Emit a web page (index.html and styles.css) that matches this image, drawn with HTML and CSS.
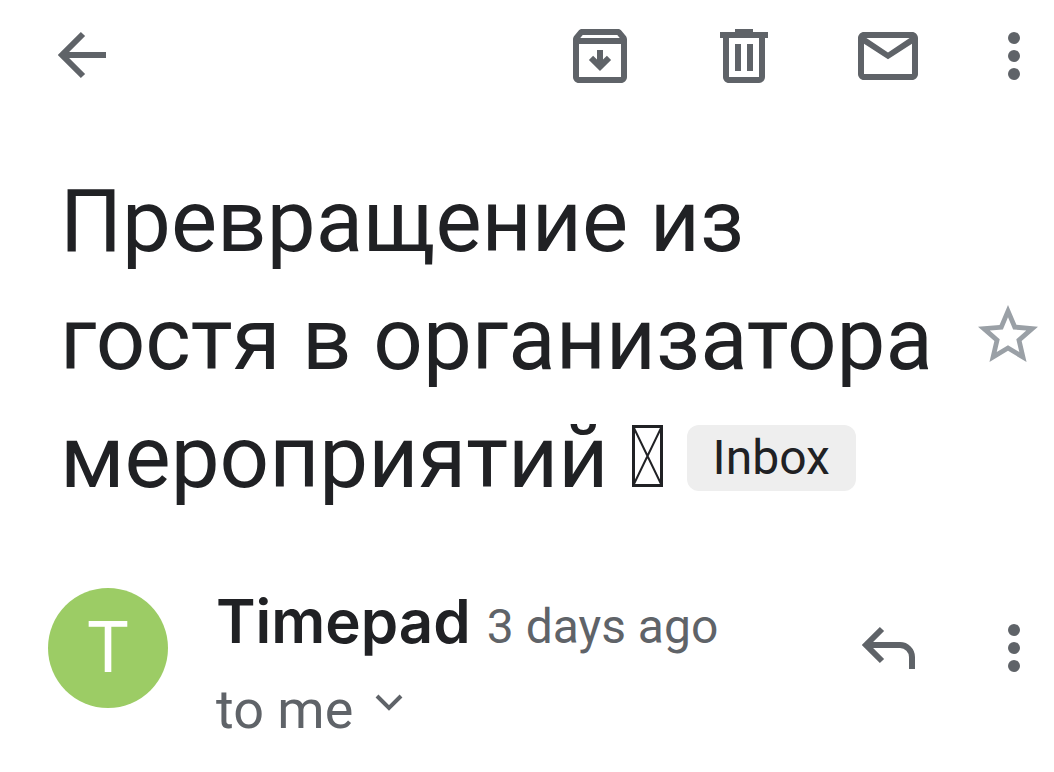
FILE: index.html
```html
<!DOCTYPE html>
<html lang="ru">
<head>
  <meta charset="UTF-8">
  <meta name="viewport" content="width=device-width, initial-scale=1.0">
  <title>Превращение из гостя в организатора мероприятий</title>
  <link rel="stylesheet" href="styles.css">
</head>
<body>
  <header class="toolbar">
    <button class="icon-btn back" aria-label="Back">
      <svg viewBox="0 0 72 72" class="line"><path d="M35 14L14 35l21 21M14 35h44"/></svg>
    </button>
    <button class="icon-btn" aria-label="Archive">
      <svg viewBox="0 0 24 24">
        <path d="M20.54 5.23l-1.39-1.68C18.88 3.21 18.47 3 18 3H6c-.47 0-.88.21-1.16.55L3.46 5.23C3.17 5.57 3 6.02 3 6.5V19c0 1.1.9 2 2 2h14c1.1 0 2-.9 2-2V6.5c0-.48-.17-.93-.46-1.27zM6.24 5h11.52l.83 1H5.42l.82-1zM5 19V8h14v11H5z"/>
        <path d="M11 10h2v3.2l1.3-1.3 1.4 1.4L12 17l-3.7-3.7 1.4-1.4 1.3 1.3z"/>
      </svg>
    </button>
    <button class="icon-btn" aria-label="Delete">
      <svg viewBox="0 0 24 24">
        <path d="M15 4V3H9v1H4v2h1v13c0 1.1.9 2 2 2h10c1.1 0 2-.9 2-2V6h1V4h-5zm2 15H7V6h10v13zM9 8h2v9H9zM13 8h2v9h-2z"/>
      </svg>
    </button>
    <button class="icon-btn" aria-label="Mark unread">
      <svg viewBox="0 0 24 24">
        <path d="M20 4H4c-1.1 0-2 .9-2 2v12c0 1.1.9 2 2 2h16c1.1 0 2-.9 2-2V6c0-1.1-.9-2-2-2zm-.8 2L12 10.8 4.8 6h14.4zM4 18V7.9l8 5.2 8-5.2V18H4z"/>
      </svg>
    </button>
    <button class="icon-btn more" aria-label="More options">
      <svg viewBox="0 0 36 72"><circle cx="18" cy="18" r="6"/><circle cx="18" cy="36" r="6"/><circle cx="18" cy="54" r="6"/></svg>
    </button>
  </header>

  <main>
    <section class="subject">
      <h1>Превращение из гостя в организатора мероприятий <svg class="glyph-box" viewBox="0 0 31 62" role="img" aria-label="emoji"><rect x="1.5" y="1.5" width="28" height="59"/><path d="M1 1l29 60M30 1L1 61"/></svg> <span class="label">Inbox</span></h1>
      <button class="icon-btn star" aria-label="Star">
        <svg viewBox="0 0 24 24"><path d="M22 9.24l-7.19-.62L12 2 9.19 8.63 2 9.24l5.46 4.73L5.82 21 12 17.27 18.18 21l-1.63-7.03L22 9.24zM12 15.4l-3.76 2.27 1-4.28-3.32-2.88 4.38-.38L12 6.1l1.71 4.04 4.38.38-3.32 2.88 1 4.28L12 15.4z"/></svg>
      </button>
    </section>

    <section class="sender">
      <div class="avatar">T</div>
      <div class="info">
        <div class="from">
          <span class="name">Timepad</span>
          <span class="date">3 days ago</span>
        </div>
        <button class="recipients">to me
          <svg viewBox="0 0 28 18"><path d="M2 3l12 12L26 3"/></svg>
        </button>
      </div>
      <button class="icon-btn" aria-label="Reply">
        <svg viewBox="0 0 72 72" class="line"><path d="M30 17L14 33l16 16M14 33h34a12 12 0 0 1 12 12v12"/></svg>
      </button>
      <button class="icon-btn more" aria-label="More options">
        <svg viewBox="0 0 36 72"><circle cx="18" cy="18" r="6"/><circle cx="18" cy="36" r="6"/><circle cx="18" cy="54" r="6"/></svg>
      </button>
    </section>
  </main>
</body>
</html>
```
FILE: styles.css
```css
* {
  box-sizing: border-box;
}
body {
  margin: 0;
  background-color: #fff;
  color: #202124;
  font-family: Roboto, sans-serif;
}
button {
  padding: 0;
  border: none;
  background: none;
  color: #5f6368;
  font: inherit;
  cursor: pointer;
}
.icon-btn {
  flex: none;
  width: 72px;
  height: 72px;
}
.icon-btn svg {
  display: block;
  width: 100%;
  height: 100%;
  fill: currentColor;
}
.icon-btn .line {
  fill: none;
  stroke: currentColor;
  stroke-width: 6;
}
.more {
  width: 36px;
}
.toolbar {
  display: flex;
  align-items: center;
  gap: 72px;
  padding: 20px 22px 20px 48px;
}
.back {
  margin-right: auto;
}
.subject {
  display: flex;
  align-items: center;
  justify-content: space-between;
  gap: 24px;
  padding: 50px 10px 0 60px;
}
.subject h1 {
  margin: 0;
  font-size: 87px;
  font-weight: 400;
  line-height: 118px;
}
.glyph-box {
  width: 31px;
  height: 62px;
  margin: 0 2px;
  fill: none;
  stroke: #202124;
  stroke-width: 2;
}
.glyph-box rect {
  stroke-width: 3;
}
.label {
  display: inline-block;
  padding: 0 26px;
  border-radius: 12px;
  background-color: #eee;
  font-size: 48px;
  line-height: 66px;
  vertical-align: 13px;
}
.star {
  margin-bottom: 8px;
  color: #9aa0a6;
}
.sender {
  display: flex;
  align-items: flex-start;
  padding: 72px 22px 24px 48px;
}
.sender .icon-btn {
  height: 120px;
}
.sender .more {
  margin-left: 72px;
}
.avatar {
  flex: none;
  width: 120px;
  height: 120px;
  border-radius: 50%;
  background-color: #9ccc65;
  color: #fff;
  font-family: "Noto Sans", sans-serif;
  font-size: 72px;
  line-height: 112px;
  text-align: center;
}
.info {
  flex: 1;
  margin-left: 48px;
}
.from {
  display: flex;
  align-items: baseline;
  gap: 16px;
  line-height: 66px;
  white-space: nowrap;
}
.name {
  font-family: Inter, sans-serif;
  font-size: 60px;
  font-weight: 600;
}
.date {
  color: #5f6368;
  font-size: 48px;
}
.recipients {
  display: flex;
  align-items: center;
  gap: 22px;
  margin-top: 14px;
  font-size: 54px;
  line-height: 72px;
}
.recipients svg {
  width: 28px;
  height: 18px;
  margin-bottom: 16px;
  fill: none;
  stroke: currentColor;
  stroke-width: 4;
}
```
